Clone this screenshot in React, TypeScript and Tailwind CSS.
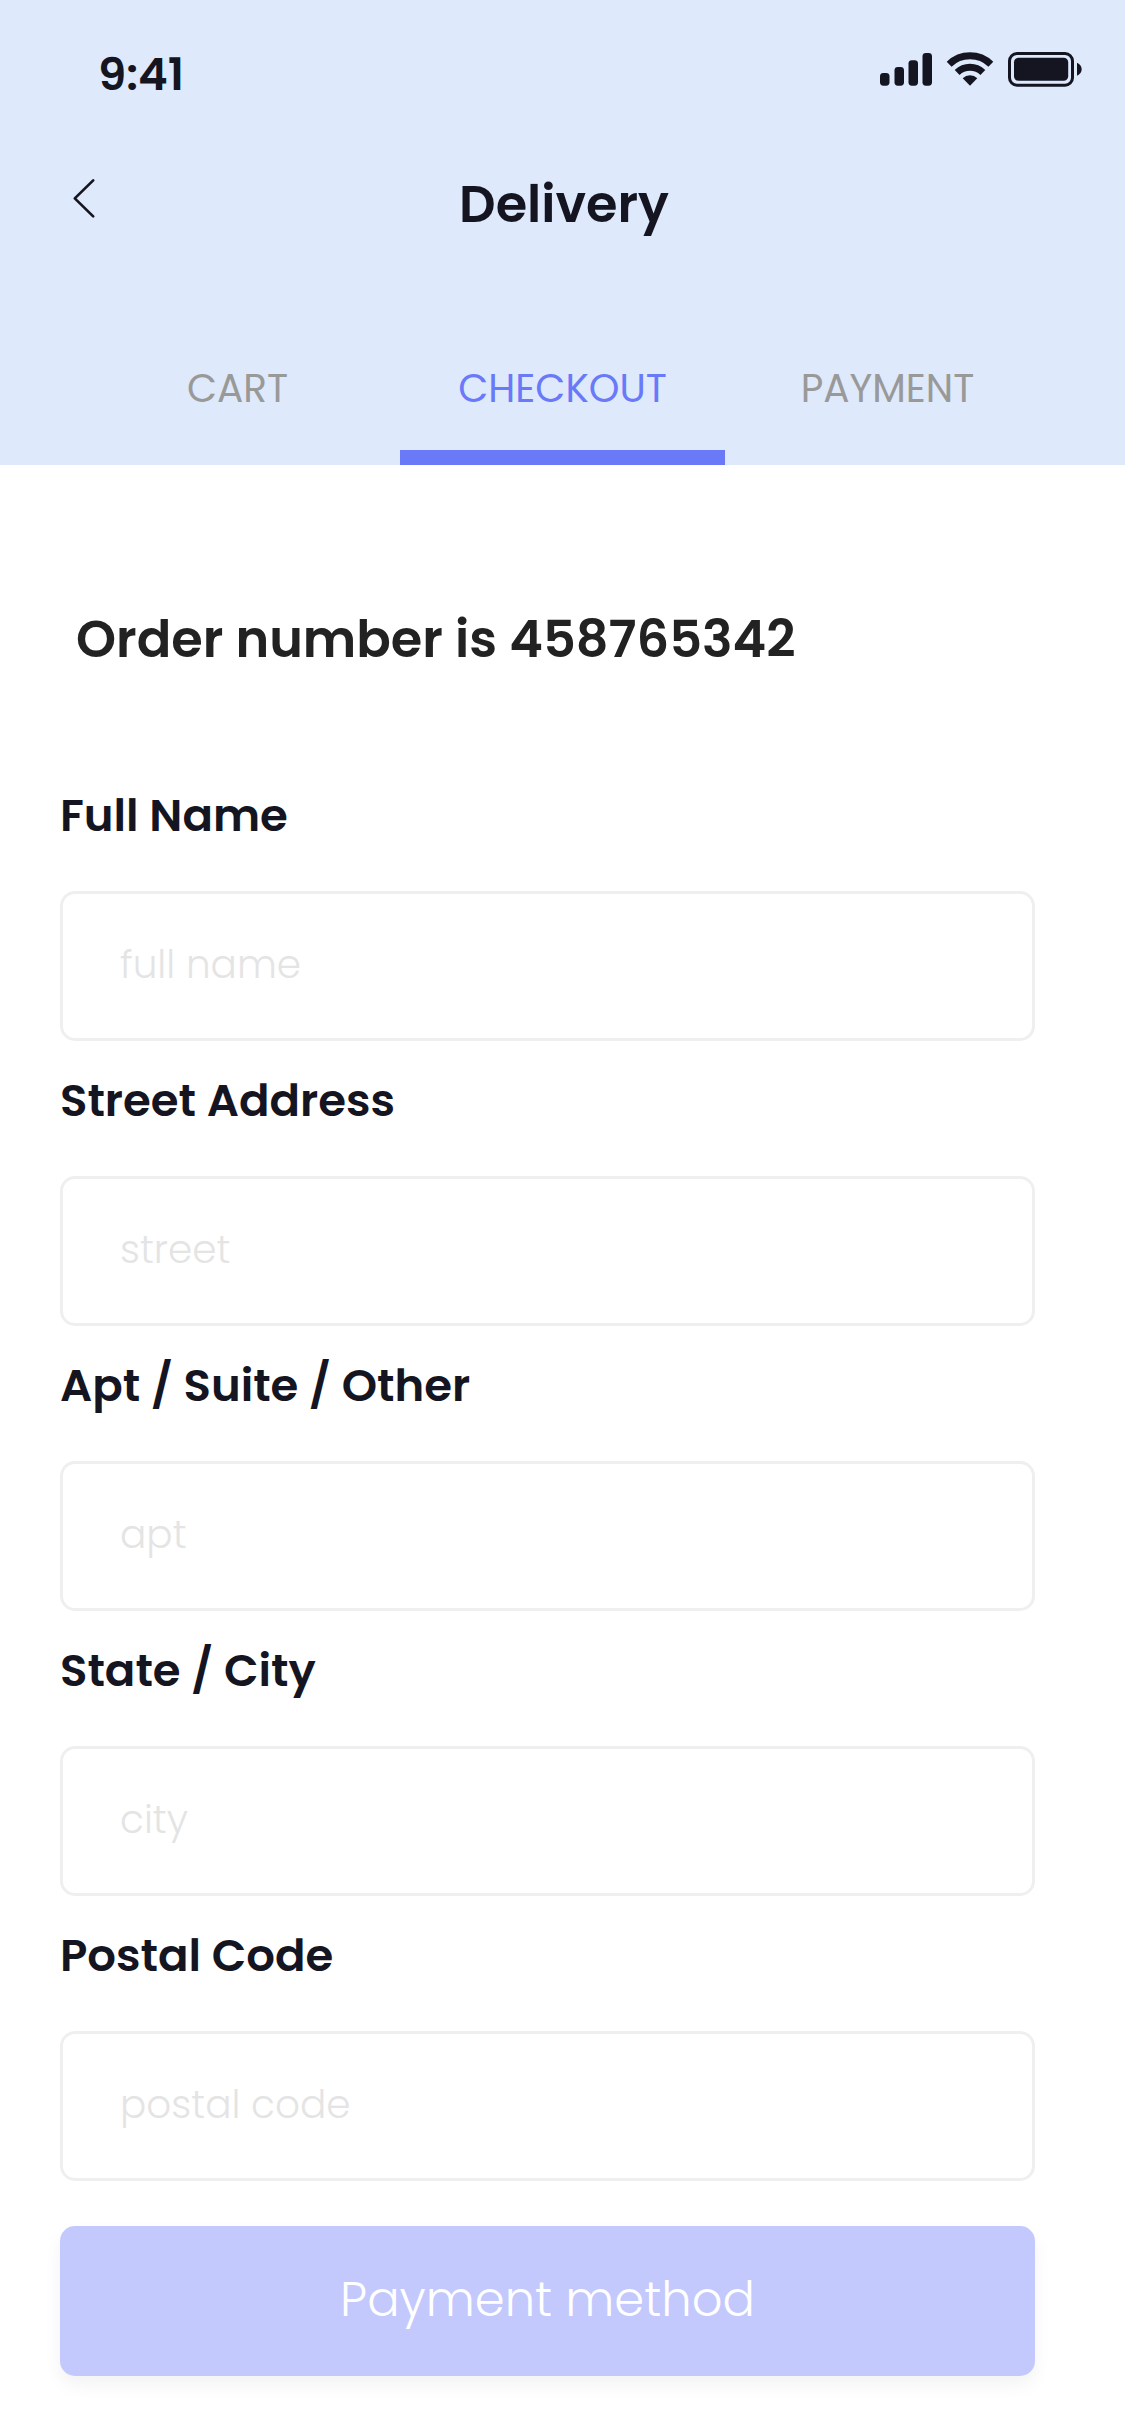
import React from 'react';

const tabs = ['CART', 'CHECKOUT', 'PAYMENT'];

const fields = [
  { label: 'Full Name', placeholder: 'full name' },
  { label: 'Street Address', placeholder: 'street' },
  { label: 'Apt / Suite / Other', placeholder: 'apt' },
  { label: 'State / City', placeholder: 'city' },
  { label: 'Postal Code', placeholder: 'postal code' },
];

function SignalIcon() {
  return (
    <svg width="52" height="34" viewBox="0 0 52 34" fill="currentColor">
      <rect x="0" y="21" width="9.5" height="12.7" rx="3.4" />
      <rect x="14.5" y="15" width="9.5" height="18.7" rx="3.4" />
      <rect x="28.5" y="8.2" width="9.5" height="25.5" rx="3.4" />
      <rect x="42.5" y="1" width="9.5" height="32.7" rx="3.4" />
    </svg>
  );
}

function WifiIcon() {
  return (
    <svg width="48" height="34" viewBox="0 0 48 34" fill="none" stroke="currentColor" strokeWidth="7">
      <path d="M3.16 12.22 A30 30 0 0 1 44.84 12.22" />
      <path d="M11.15 20.49 A18.5 18.5 0 0 1 36.85 20.49" />
      <path d="M24 33.8 L16.71 26.25 A10.5 10.5 0 0 1 31.29 26.25 Z" fill="currentColor" stroke="none" />
    </svg>
  );
}

function BatteryIcon() {
  return (
    <svg width="75" height="35" viewBox="0 0 75 35" fill="currentColor">
      <rect x="1.5" y="1.5" width="63" height="31.7" rx="7.5" fill="none" stroke="currentColor" strokeWidth="3" />
      <rect x="6" y="5.8" width="54.2" height="23" rx="4.5" />
      <path d="M69 10.8 C75.2 13.3 75.2 21.3 69 23.8 Z" />
    </svg>
  );
}

export default function App() {
  return (
    <div className="flex h-[2436px] w-[1125px] flex-col overflow-hidden bg-white font-[Poppins,sans-serif] text-[#151522]">
      <header className="flex h-[465px] flex-col bg-[#dee9fb]">
        <div className="flex items-start justify-between pt-[41px] pr-[42px] pl-[98px]">
          <span className="text-[45px] leading-[67px] font-semibold">9:41</span>
          <div className="flex items-start gap-[14px] pt-[11px]">
            <SignalIcon />
            <WifiIcon />
            <BatteryIcon />
          </div>
        </div>
        <div className="mt-[58px] grid grid-cols-[150px_1fr_150px]">
          <button className="flex pt-[12px] pl-[72px]" aria-label="Back">
            <svg width="24" height="42" viewBox="0 0 24 42" fill="none" stroke="currentColor" strokeWidth="2.7" strokeLinecap="round" strokeLinejoin="round">
              <path d="M21.2 2.4 L2.8 20.4 L21.2 38.4" />
            </svg>
          </button>
          <h1 className="pl-[3px] text-center text-[51px] leading-[76px] font-semibold">Delivery</h1>
        </div>
        <nav className="mt-auto grid h-[106px] grid-cols-3 px-[75px] text-[39px] leading-[59px]">
          {tabs.map((tab) => (
            <button
              key={tab}
              className={
                tab === 'CHECKOUT'
                  ? 'flex items-start justify-center border-b-[15px] border-[#6979f8] text-[#6979f8]'
                  : 'flex items-start justify-center text-[#999999]'
              }
            >
              {tab}
            </button>
          ))}
        </nav>
      </header>

      <main className="flex w-[1035px] flex-col pt-[136px] pl-[60px]">
        <h2 className="pl-[16px] text-[51px] leading-[76px] font-semibold text-[#222222]">Order number is 458765342</h2>
        <form className="mt-[105px] flex flex-col gap-[26px]">
          {fields.map((field) => (
            <label key={field.label} className="flex flex-col gap-[42px]">
              <span className="text-[45px] leading-[67px] font-semibold">{field.label}</span>
              <input
                placeholder={field.placeholder}
                className="h-[150px] w-full rounded-[15px] border-[3px] border-[#efefef] px-[57px] pb-[3px] text-[39px] leading-[59px] font-light placeholder:text-[#e4e4e4]"
              />
            </label>
          ))}
          <button
            type="button"
            className="mt-[19px] h-[150px] rounded-[15px] bg-[#c3c9fd] pb-[2px] text-[48px] leading-[72px] font-light text-white shadow-[0_9px_18px_rgba(0,0,0,0.05)]"
          >
            Payment method
          </button>
        </form>
      </main>
    </div>
  );
}
